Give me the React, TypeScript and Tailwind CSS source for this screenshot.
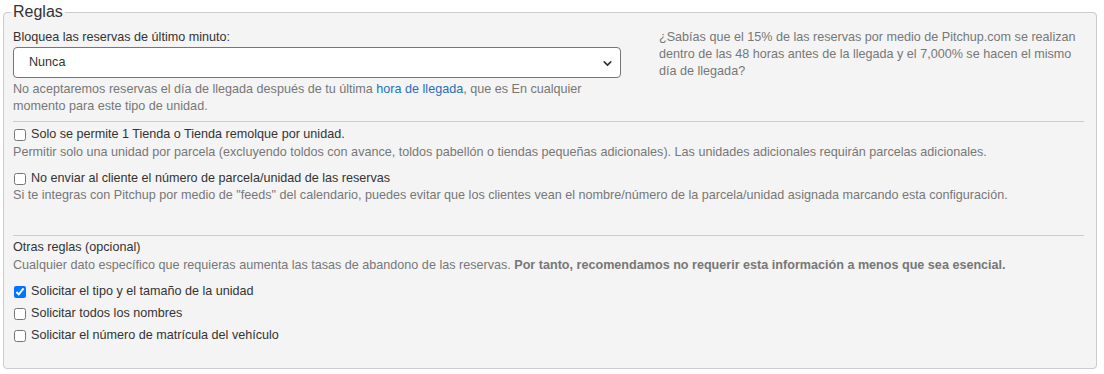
import { ChevronDown } from 'lucide-react';

function CheckRow({ label, checked = false }: { label: string; checked?: boolean }) {
  return (
    <label className="flex items-center gap-[5px] h-[17px]">
      <input type="checkbox" defaultChecked={checked} className="w-[12px] h-[12px] m-0 ml-[1px]" />
      <span className="text-[#333]">{label}</span>
    </label>
  );
}

export default function App() {
  return (
    <div className="bg-white w-[1104px] h-[374px] pt-[3px] pl-[3px] font-['Liberation_Sans',Arial,sans-serif] text-[12.6px] leading-[17px]">
      <fieldset className="w-[1094px] h-[366px] border border-[#cccccc] rounded-[4px] bg-[#f4f4f4] pl-[9px] pr-[12px]">
        <legend className="-ml-[2px] px-[2px] text-[16px] leading-[18px] text-[#333]">Reglas</legend>

        <div className="flex mt-[8px]">
          <div className="w-[608px]">
            <div className="text-[#333]">Bloquea las reservas de último minuto:</div>
            <div className="relative mt-[1px] h-[31px] bg-white border border-[#767676] rounded-[4px] flex items-center pl-[15px] text-[#333]">
              Nunca
              <ChevronDown className="absolute right-[6px] top-[9px] w-[13px] h-[13px] text-[#333]" strokeWidth={3} />
            </div>
            <p className="mt-[3px] text-[#777] w-[580px]">
              No aceptaremos reservas el día de llegada después de tu última <span className="text-[#1f6fbf]">hora de llegada</span>, que es En cualquier momento para este tipo de unidad.
            </p>
          </div>
          <div className="ml-[38px] w-[420px] text-[#777]">
            ¿Sabías que el 15% de las reservas por medio de Pitchup.com se realizan dentro de las 48 horas antes de la llegada y el 7,000% se hacen el mismo día de llegada?
          </div>
        </div>

        <div className="mt-[6px] border-t border-[#cccccc]" />

        <div className="mt-[4px]">
          <CheckRow label="Solo se permite 1 Tienda o Tienda remolque por unidad." />
          <p className="mt-[1px] text-[#777]">
            Permitir solo una unidad por parcela (excluyendo toldos con avance, toldos pabellón o tiendas pequeñas adicionales). Las unidades adicionales requirán parcelas adicionales.
          </p>
        </div>

        <div className="mt-[9px]">
          <CheckRow label="No enviar al cliente el número de parcela/unidad de las reservas" />
          <p className="text-[#777]">
            Si te integras con Pitchup por medio de "feeds" del calendario, puedes evitar que los clientes vean el nombre/número de la parcela/unidad asignada marcando esta configuración.
          </p>
        </div>

        <div className="mt-[31px] border-t border-[#cccccc]" />

        <div className="mt-[3px]">
          <div className="text-[#333]">Otras reglas (opcional)</div>
          <p className="mt-[1px] text-[#777]">
            Cualquier dato específico que requieras aumenta las tasas de abandono de las reservas.{' '}
            <b className="font-bold">Por tanto, recomendamos no requerir esta información a menos que sea esencial.</b>
          </p>
          <div className="mt-[9px] flex flex-col gap-[5px]">
            <CheckRow label="Solicitar el tipo y el tamaño de la unidad" checked />
            <CheckRow label="Solicitar todos los nombres" />
            <CheckRow label="Solicitar el número de matrícula del vehículo" />
          </div>
        </div>
      </fieldset>
    </div>
  );
}
